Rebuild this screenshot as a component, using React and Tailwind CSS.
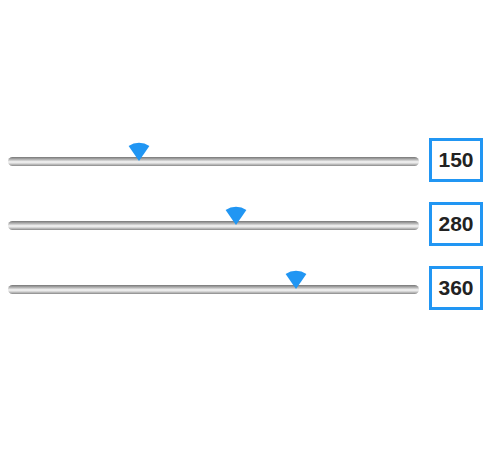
import React from "react";

const sliders = [
  { id: "a", value: 150 },
  { id: "b", value: 280 },
  { id: "c", value: 360 },
];

const MIN = 0;
const MAX = 500;
const THUMB = 36; // thumb footprint on the track

// blue wedge thumb, tip sits on the track's centre line
function Thumb({ left }) {
  return (
    <svg
      width="24"
      height="20"
      viewBox="0 0 24 20"
      className="absolute top-[4px]"
      style={{ left: left - 12 }}
    >
      <path d="M12 19 L1.6 4 A18.5 18.5 0 0 1 22.4 4 Z" fill="#2196f3" />
    </svg>
  );
}

function SliderRow({ value }) {
  const trackWidth = 411;
  const pos = THUMB / 2 + ((trackWidth - THUMB) * (value - MIN)) / (MAX - MIN);

  return (
    <div className="flex items-center gap-[10px]">
      <div className="relative h-[44px] flex-1">
        <div className="absolute left-0 right-0 top-[19px] h-[9px] rounded-full bg-[linear-gradient(180deg,#767676_0%,#b5b5b5_28%,#f7f7f7_55%,#d0d0d0_75%,#888888_100%)]" />
        <Thumb left={pos} />
      </div>
      <div className="flex h-[44px] w-[54px] items-center justify-center border-[3px] border-[#2196f3] bg-white">
        <span className="font-['Liberation_Sans',Arial,sans-serif] text-[21px] font-bold text-[#222]">
          {value}
        </span>
      </div>
    </div>
  );
}

export default function App() {
  return (
    <div className="h-[472px] w-[500px] bg-white pl-[8px] pr-[17px] pt-[138px]">
      <div className="flex flex-col gap-[20px]">
        {sliders.map((s) => (
          <SliderRow key={s.id} value={s.value} />
        ))}
      </div>
    </div>
  );
}
